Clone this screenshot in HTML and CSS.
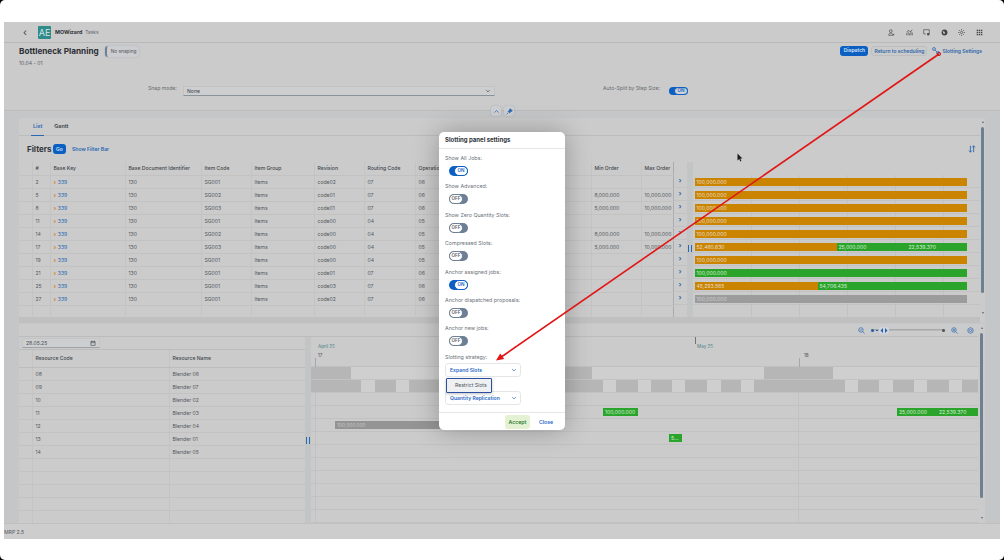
FILE: index.html
```html
<!DOCTYPE html>
<html lang="en">
<head>
<meta charset="utf-8">
<title>Bottleneck Planning</title>
<link rel="stylesheet" href="styles.css">
</head>
<body>
<div class="page">
  <div class="app">
    <div class="shell">
      <span class="back">&#8249;</span>
      <span class="logo">AE</span>
      <span class="appname">MOWizard</span>
      <span class="apptask">Tasks</span>
      <span class="shell-icons">
        <svg class="ico" viewBox="0 0 10 10"><circle cx="4" cy="3" r="2"/><path d="M1 9c0-2 1-3 3-3s3 1 3 3zM8 7v2M7 8h2"/></svg>
        <svg class="ico" viewBox="0 0 10 10"><path d="M1 9V6M3 9V4M5 9V6M7 9V3M9 9V5M1 4l3-2 2 2 3-3"/></svg>
        <svg class="ico" viewBox="0 0 10 10"><path d="M1 1h8v6H6M1 1v6h3"/><rect x="6" y="6" width="3" height="3" class="fill"/></svg>
        <svg class="ico" viewBox="0 0 10 10"><circle cx="5" cy="5" r="4.2" class="fill"/><path d="M2 3l3 1 1 2-2 1zM6 1l2 2" class="cut"/></svg>
        <svg class="ico" viewBox="0 0 10 10"><circle cx="5" cy="5" r="1.6"/><path d="M5 0v2M5 8v2M0 5h2M8 5h2M1.5 1.5l1.4 1.4M7.1 7.1l1.4 1.4M1.5 8.5l1.4-1.4M7.1 2.9l1.4-1.4"/></svg>
        <svg class="ico" viewBox="0 0 10 10"><path d="M1 1h2v2H1zM4 1h2v2H4zM7 1h2v2H7zM1 4h2v2H1zM4 4h2v2H4zM7 4h2v2H7zM1 7h2v2H1zM4 7h2v2H4zM7 7h2v2H7z" class="fill"/></svg>
      </span>
    </div>

    <div class="header">
      <div class="title-row">
        <div class="title-left">
          <h1 class="title">Bottleneck Planning</h1>
          <span class="chip">No snaping</span>
        </div>
        <div class="actions">
          <span class="btn btn-primary">Dispatch</span>
          <span class="btn btn-outline">Return to scheduling</span>
          <span class="btn-link">
            <svg class="ico-blue big" viewBox="0 0 10 10"><circle cx="2.5" cy="2.5" r="1.8"/><circle cx="7.5" cy="7.5" r="1.8"/><path d="M4 4l2 2"/></svg>
            Slotting Settings
          </span>
        </div>
      </div>
      <div class="subtitle">10.04 - 01</div>
      <div class="snap-row">
        <span class="snap-label">Snap mode:</span>
        <div class="snap-select"><span>None</span><svg class="chev" viewBox="0 0 10 10"><path d="M2 3.5l3 3 3-3"/></svg></div>
        <span class="split-label">Auto-Split by Step Size:</span>
        <span class="toggle on dim"><span class="knob">ON</span></span>
      </div>
      <div class="collapse">
        <span class="round"><svg class="ico-blue" viewBox="0 0 10 10"><path d="M2 6.5l3-3 3 3"/></svg></span>
        <span class="round"><svg class="ico-blue" viewBox="0 0 10 10"><path d="M6 1l3 3-2 1-2 2-2-2 2-2zM3 7L1 9" class="thick"/></svg></span>
      </div>
    </div>

    <div class="main">
      <section class="panel upper">
        <div class="panel-body">
          <div class="tabs"><span class="tab active">List</span><span class="tab">Gantt</span></div>
          <div class="filters">
            <span class="filters-title">Filters</span>
            <span class="go">Go</span>
            <span class="show-filter">Show Filter Bar</span>
            <svg class="sort" viewBox="0 0 10 10"><path d="M3 1v8M1.2 7L3 9l1.8-2M7 9V1M5.2 3L7 1l1.8 2"/></svg>
          </div>
          <div class="split">
            <table class="grid">
              <colgroup><col class="c1"><col class="c2"><col class="c3"><col class="c4"><col class="c5"><col class="c6"><col class="c7"><col class="c8"><col class="c9"><col class="c10"><col class="c11"></colgroup>
              <thead><tr><th></th><th>#</th><th>Base Key</th><th>Base Document Identifier</th><th>Item Code</th><th>Item Group</th><th>Revision</th><th>Routing Code</th><th>Operation</th><th>Min Order</th><th>Max Order</th></tr></thead>
              <tbody>
                <tr><td></td><td>2</td><td><span class="ok">&#8250;</span> <a class="lnk">339</a></td><td>130</td><td>SG001</td><td>Items</td><td>code02</td><td>07</td><td>06</td><td></td><td></td></tr>
                <tr><td></td><td>5</td><td><span class="ok">&#8250;</span> <a class="lnk">339</a></td><td>130</td><td>SG002</td><td>Items</td><td>code01</td><td>07</td><td>06</td><td>8,000.000</td><td>10,000.000</td></tr>
                <tr><td></td><td>8</td><td><span class="ok">&#8250;</span> <a class="lnk">339</a></td><td>130</td><td>SG003</td><td>Items</td><td>code01</td><td>07</td><td>06</td><td>5,000.000</td><td>10,000.000</td></tr>
                <tr><td></td><td>11</td><td><span class="ok">&#8250;</span> <a class="lnk">339</a></td><td>130</td><td>SG001</td><td>Items</td><td>code00</td><td>04</td><td>05</td><td></td><td></td></tr>
                <tr><td></td><td>14</td><td><span class="ok">&#8250;</span> <a class="lnk">339</a></td><td>130</td><td>SG002</td><td>Items</td><td>code00</td><td>04</td><td>05</td><td>8,000.000</td><td>10,000.000</td></tr>
                <tr><td></td><td>17</td><td><span class="ok">&#8250;</span> <a class="lnk">339</a></td><td>130</td><td>SG003</td><td>Items</td><td>code00</td><td>04</td><td>05</td><td>5,000.000</td><td>10,000.000</td></tr>
                <tr><td></td><td>19</td><td><span class="ok">&#8250;</span> <a class="lnk">339</a></td><td>130</td><td>SG001</td><td>Items</td><td>code00</td><td>04</td><td>05</td><td></td><td></td></tr>
                <tr><td></td><td>21</td><td><span class="ok">&#8250;</span> <a class="lnk">339</a></td><td>130</td><td>SG001</td><td>Items</td><td>code01</td><td>07</td><td>06</td><td></td><td></td></tr>
                <tr><td></td><td>25</td><td><span class="ok">&#8250;</span> <a class="lnk">339</a></td><td>130</td><td>SG001</td><td>Items</td><td>code03</td><td>07</td><td>06</td><td></td><td></td></tr>
                <tr><td></td><td>27</td><td><span class="ok">&#8250;</span> <a class="lnk">339</a></td><td>130</td><td>SG001</td><td>Items</td><td>code02</td><td>07</td><td>06</td><td></td><td></td></tr>
                <tr class="blank"><td></td><td></td><td></td><td></td><td></td><td></td><td></td><td></td><td></td><td></td><td></td></tr>
              </tbody>
            </table>
            <div class="navcol">
              <span>&#8250;</span><span>&#8250;</span><span>&#8250;</span><span>&#8250;</span><span>&#8250;</span><span>&#8250;</span><span>&#8250;</span><span>&#8250;</span><span>&#8250;</span><span>&#8250;</span>
            </div>
            <div class="handle"><i class="grip"></i></div>
            <div class="chart">
              <div class="crow"><div class="bar or grow">100,000.000</div></div>
              <div class="crow"><div class="bar or grow">100,000.000</div></div>
              <div class="crow"><div class="bar or grow">100,000.000</div></div>
              <div class="crow"><div class="bar or grow">100,000.000</div></div>
              <div class="crow"><div class="bar or grow">100,000.000</div></div>
              <div class="crow"><div class="bar or" style="width:142px">52,460.630</div><div class="bar gr" style="width:70px">25,000.000</div><div class="bar gr" style="width:60px">22,539.370</div></div>
              <div class="crow"><div class="bar or grow">100,000.000</div></div>
              <div class="crow"><div class="bar gr grow">100,000.000</div></div>
              <div class="crow"><div class="bar or" style="width:123px">45,293.565</div><div class="bar gr grow">54,706.435</div></div>
              <div class="crow"><div class="bar gy grow">100,000.000</div></div>
            </div>
          </div>
          <div class="hbar"></div>
        </div>
        <div class="vscroll"><i class="up"></i><b class="thumb-up"></b><i class="down"></i></div>
      </section>

      <section class="panel lower">
        <div class="panel-body">
          <div class="toolbar">
            <svg class="ico-blue tool" viewBox="0 0 10 10"><circle cx="4.2" cy="4.2" r="3.2"/><path d="M6.6 6.6L9.4 9.4M2.6 4.2h3.2"/></svg>
            <span class="slider"><i class="dot"></i><i class="dash"></i><i class="thumb"><svg class="thumb-arrows" viewBox="0 0 10 7"><path d="M4 1v5L1.5 3.5zM6 1v5l2.5-2.5z"/></svg></i><i class="dot end"></i></span>
            <svg class="ico-blue tool" viewBox="0 0 10 10"><circle cx="4.2" cy="4.2" r="3.2"/><path d="M6.6 6.6L9.4 9.4M2.6 4.2h3.2M4.2 2.6v3.2"/></svg>
            <svg class="ico-blue tool gear" viewBox="0 0 10 10"><circle cx="5" cy="5" r="1.6"/><path d="M5 .8l3.6 2.1v4.2L5 9.2 1.4 7.1V2.9z"/></svg>
          </div>
          <div class="gantt">
            <div class="res">
              <div class="date-row"><div class="date"><span>28.05.25</span><svg class="cal" viewBox="0 0 10 10"><path d="M1.5 2.5h7v6.5h-7zM1.5 4.5h7M3 1v2M7 1v2"/></svg></div></div>
              <table class="grid resgrid">
                <colgroup><col class="r1"><col class="r2"><col class="r3"></colgroup>
                <thead><tr><th></th><th>Resource Code</th><th>Resource Name</th></tr></thead>
                <tbody>
                  <tr><td></td><td>08</td><td>Blender 06</td></tr>
                  <tr><td></td><td>09</td><td>Blender 07</td></tr>
                  <tr><td></td><td>10</td><td>Blender 02</td></tr>
                  <tr><td></td><td>11</td><td>Blender 03</td></tr>
                  <tr><td></td><td>12</td><td>Blender 04</td></tr>
                  <tr><td></td><td>13</td><td>Blender 01</td></tr>
                  <tr><td></td><td>14</td><td>Blender 05</td></tr>
                  <tr><td></td><td></td><td></td></tr>
                  <tr><td></td><td></td><td></td></tr>
                  <tr><td></td><td></td><td></td></tr>
                  <tr><td></td><td></td><td></td></tr>
                  <tr><td></td><td></td><td></td></tr>
                </tbody>
              </table>
            </div>
            <div class="handle"><i class="grip low"></i></div>
            <div class="timeline">
              <div class="axis months"><span class="month" style="width:379px">April 25</span><span class="month tick">May 25</span></div>
              <div class="axis days"><span class="day" style="width:485px">17</span><span class="day second">18</span></div>
              <div class="trows">
                <div class="trow"><i class="nw" style="width:40px"></i><i class="wk" style="width:169px"></i><i class="nw" style="width:72px"></i><i class="wk" style="width:172px"></i><i class="nw" style="width:69px"></i><i class="wk" style="width:145px"></i></div>
                <div class="trow">
                  <i class="nw" style="width:50px"></i><i class="wk" style="width:14px"></i><i class="nw" style="width:21px"></i><i class="wk" style="width:13px"></i><i class="nw" style="width:194px"></i>
                  <i class="wk" style="width:13px"></i><i class="nw" style="width:22px"></i><i class="wk" style="width:13px"></i><i class="nw" style="width:21px"></i><i class="wk" style="width:13px"></i><i class="nw" style="width:22px"></i><i class="wk" style="width:14px"></i><i class="nw" style="width:20px"></i><i class="wk" style="width:13px"></i><i class="nw" style="width:91px"></i><i class="wk" style="width:13px"></i><i class="nw" style="width:21px"></i><i class="wk" style="width:14px"></i><i class="nw" style="width:21px"></i><i class="wk" style="width:13px"></i><i class="nw" style="width:22px"></i><i class="wk" style="width:13px"></i><i class="nw" style="width:16px"></i>
                </div>
                <div class="trow"></div>
                <div class="trow"><i class="sp" style="width:292px"></i><div class="bar gr tb" style="width:35px">100,000.000</div><i class="sp" style="width:259px"></i><div class="bar gr tb" style="width:40px">25,000.000</div><div class="bar gr tb" style="width:41px">22,539.370</div></div>
                <div class="trow"><i class="sp" style="width:24px"></i><div class="bar gd tb" style="width:120px">100,000.000</div></div>
                <div class="trow"><i class="sp" style="width:358px"></i><div class="bar gr tb" style="width:13px">5...</div></div>
                <div class="trow"></div>
                <div class="trow"></div>
                <div class="trow"></div>
                <div class="trow"></div>
                <div class="trow"></div>
                <div class="trow"></div>
              </div>
            </div>
          </div>
        </div>
        <div class="vscroll low"><i class="up"></i><b class="thumb-low"></b><i class="down"></i></div>
      </section>
    </div>

    <div class="footer">MRP 2.5</div>

    <div class="modal">
      <div class="modal-title">Slotting panel settings</div>
      <div class="modal-body">
        <div class="field"><label>Show All Jobs:</label><span class="toggle on"><span class="knob">ON</span></span></div>
        <div class="field"><label>Show Advanced:</label><span class="toggle"><span class="knob">OFF</span></span></div>
        <div class="field"><label>Show Zero Quantity Slots:</label><span class="toggle"><span class="knob">OFF</span></span></div>
        <div class="field"><label>Compressed Slots:</label><span class="toggle"><span class="knob">OFF</span></span></div>
        <div class="field"><label>Anchor assigned jobs:</label><span class="toggle on"><span class="knob">ON</span></span></div>
        <div class="field"><label>Anchor dispatched proposals:</label><span class="toggle"><span class="knob">OFF</span></span></div>
        <div class="field"><label>Anchor new jobs:</label><span class="toggle"><span class="knob">OFF</span></span></div>
        <div class="sfield"><label>Slotting strategy:</label><div class="mselect"><span>Expand Slots</span><svg class="chev blue" viewBox="0 0 10 10"><path d="M2 3.5l3 3 3-3"/></svg></div></div>
        <div class="sfield second"><label></label><div class="mselect"><span>Quantity Replication</span><svg class="chev blue" viewBox="0 0 10 10"><path d="M2 3.5l3 3 3-3"/></svg></div></div>
      </div>
      <div class="modal-foot"><span class="accept">Accept</span><span class="close">Close</span></div>
      <div class="popup">Restrict Slots</div>
    </div>

    <svg class="annot" viewBox="0 0 1004 560" aria-hidden="true">
      <path class="cursor" d="M737.5 153.5v7l1.7-1.5 1.2 2.6 1-.5-1.2-2.5h2.3z"/>
      <circle class="dotred" cx="939" cy="54" r="1.6"/>
      <path class="redline" d="M939 54L502 356.5"/>
      <path class="redhead" d="M496 360.5l4.2-7 4 5.6z"/>
    </svg>
  </div>
</div>
</body>
</html>
```
FILE: styles.css
```css
* { box-sizing: border-box; }
html { background: #000; height: 100%; }
body {
  margin: 0; width: 1004px; height: 560px; overflow: hidden;
  background: #fff; border-radius: 5px;
  font-family: "Inter", "Liberation Sans", sans-serif; font-size: 5.1px; color: #4e5359;
}
.page { padding: 22px 4px 21px; height: 560px; }
.app { height: 517px; display: flex; flex-direction: column; background: #cbcbcb; }

/* shell */
.shell { height: 21px; flex: none; display: flex; align-items: center; border-bottom: 1px solid #b9b9b9; padding-left: 19px; background: #cbcbcb; }
.back { font-size: 10px; line-height: 10px; width: 15px; color: #3b3f45; }
.logo { width: 13px; height: 13px; background: #2f8a8a; color: #d5e5e5; font-size: 9px; line-height: 13px; text-align: center; border-radius: 1px; margin-right: 4px; }
.appname { font-weight: 700; color: #2f3338; font-size: 5.3px; margin-right: 3px; }
.apptask { color: #5d6268; font-size: 4.8px; }
.shell-icons { margin-left: auto; display: flex; gap: 10.6px; padding-right: 17px; }
.ico { width: 7px; height: 7px; fill: none; stroke: #3f444a; stroke-width: .9; }
.ico .fill { fill: #3f444a; stroke: none; }
.ico .cut { fill: #cbcbcb; stroke: none; }

/* header */
.header { height: 68px; flex: none; position: relative; border-bottom: 1px solid #bcbcbc; padding: 2px 18px 0 15px; background: #cbcbcb; }
.title-row { height: 12px; display: flex; justify-content: space-between; align-items: center; }
.title-left { display: flex; align-items: center; gap: 6px; }
.title { margin: 0; font-size: 8.2px; font-weight: 700; color: #2c3036; line-height: 12px; }
.chip { height: 11px; width: 34px; line-height: 10px; padding-left: 4px; font-size: 4.8px; color: #51565c; border-radius: 3px; background: #cbcdd0; border-left: 2px solid #6c7f94; box-shadow: 0 0 2px #aaaeb3; white-space: nowrap; }
.actions { display: flex; align-items: center; gap: 3px; }
.btn { height: 10px; line-height: 9px; border-radius: 3px; font-size: 5px; font-weight: 600; padding: 0 2px; text-align: center; white-space: nowrap; }
.btn-primary { width: 28px; background: #0c5fc2; color: #d4e3f5; }
.btn-outline { width: 56px; border: 1px solid #bcbec1; color: #2d66aa; line-height: 8px; }
.btn-link { display: flex; align-items: center; gap: 2px; color: #2d66aa; font-size: 5px; font-weight: 600; margin-left: 2px; white-space: nowrap; }
.ico-blue { width: 7px; height: 7px; fill: none; stroke: #2a68b2; stroke-width: 1; }
.ico-blue.big { width: 8px; height: 8px; }
.subtitle { font-size: 5.1px; line-height: 10px; margin-top: 1px; color: #5b6066; }
.snap-row { display: flex; align-items: flex-start; height: 11px; margin-top: 17px; padding-left: 129px; }
.snap-label { width: 35px; color: #676c72; line-height: 6px; }
.snap-select { width: 312px; height: 10px; margin-top: 1px; display: flex; align-items: center; justify-content: space-between; padding: 0 3px; background: #cdced0; border: 1px solid #c2c3c5; border-bottom: 1px solid #8a929c; color: #3d4147; }
.chev { width: 6px; height: 6px; fill: none; stroke: #4a4e54; stroke-width: 1.2; }
.chev.blue { stroke: #2a68b2; }
.split-label { margin-left: 108px; width: 66px; color: #676c72; line-height: 6px; white-space: nowrap; }
.collapse { position: absolute; left: 487px; bottom: -6px; display: flex; gap: 3px; }
.round { width: 10px; height: 10px; border-radius: 3px; background: #ccced1; box-shadow: 0 0 2px #a9adb2; display: flex; align-items: center; justify-content: center; }
.thick { stroke-width: 1.1; fill: #2a68b2; }

/* toggles */
.toggle { display: flex; width: 19px; height: 10px; border-radius: 5px; background: #6d7f93; align-items: stretch; }
.toggle.on { background: #0c5fc2; justify-content: flex-end; }
.knob { width: 14px; border-radius: 5px; background: #fff; border: 1px solid #6d7f93; color: #5c6066; font-size: 4.6px; line-height: 8px; text-align: center; font-weight: 600; }
.on .knob { border-color: #0c5fc2; color: #0c5fc2; }
.dim { height: 8px; margin-top: 2px; }
.dim .knob { background: #cfd3d8; line-height: 6px; }

/* main */
.main { height: 412px; flex: none; background: #c4c6c8; padding: 7px 15px 0; display: flex; flex-direction: column; gap: 1px; }
.panel { display: flex; background: #cbcbcb; }
.panel-body { width: 961px; flex: none; }
.upper { height: 205px; flex: none; }
.lower { height: 199px; flex: none; }
.tabs { height: 18px; display: flex; padding-left: 12px; gap: 8px; border-bottom: 1px solid #bcbcbc; }
.tab { font-size: 5.4px; font-weight: 600; line-height: 17px; padding: 0 2px; color: #3c4046; height: 18px; }
.tab.active { color: #2a68b2; border-bottom: 1px solid #2a68b2; }
.filters { height: 26px; display: flex; align-items: center; padding: 0 4px 1px 8px; }
.filters-title { font-size: 8px; font-weight: 700; color: #33373d; width: 26px; }
.go { width: 13px; height: 10px; line-height: 10px; background: #0c5fc2; color: #cfe0f4; border-radius: 3px; text-align: center; font-size: 5px; font-weight: 600; margin-right: 6px; }
.show-filter { color: #2a68b2; font-weight: 600; font-size: 5.1px; }
.sort { width: 8px; height: 8px; margin-left: auto; fill: none; stroke: #2a68b2; stroke-width: 1.1; }
.split { display: flex; height: 155px; }

/* tables */
.grid { border-collapse: collapse; table-layout: fixed; width: 654px; flex: none; height: 155px; }
.grid th, .grid td { padding: 0 0 0 3px; text-align: left; height: 13px; white-space: nowrap; overflow: hidden; font-size: 5.1px; line-height: 12px; border-bottom: 1px solid #c2c2c2; border-right: 1px solid #c4c4c4; font-weight: 400; color: #53585e; }
.grid th { font-weight: 500; color: #43474d; }
.grid td:last-child, .grid th:last-child { border-right: 1px solid #a9adb1; }
.grid .blank td { height: 12px; border-bottom: 0; }
.c1 { width: 13px; } .c2 { width: 18px; } .c3 { width: 75px; } .c4 { width: 76px; } .c5 { width: 50px; } .c6 { width: 63px; } .c7 { width: 50px; } .c8 { width: 51px; } .c9 { width: 176px; } .c10 { width: 50px; } .c11 { width: 32px; }
.ok { color: #d98a10; font-weight: 700; font-size: 6.5px; }
.lnk { color: #2a68b2; }
.navcol { width: 13px; flex: none; padding-top: 13px; display: flex; flex-direction: column; }
.navcol span { height: 13px; line-height: 12px; text-align: center; color: #2a68b2; font-size: 7px; font-weight: 700; border-bottom: 1px solid #c2c2c2; }
.handle { width: 6px; flex: none; background: #c2c4c6; position: relative; }
.grip { position: absolute; left: 1px; top: 83px; width: 4px; height: 7px; background: linear-gradient(90deg, #2a68b2 0 1.2px, transparent 1.2px 2.6px, #2a68b2 2.6px), repeating-linear-gradient(0deg, transparent 0 1px, #c2c4c6 1px 2px); background-blend-mode: normal; }
.grip.low { top: 100px; }
.chart { width: 288px; flex: none; padding-top: 13px; background-image: repeating-linear-gradient(90deg, transparent 0 47px, #c2c2c2 47px 48px); background-position: 11px 13px; background-repeat: no-repeat; background-size: 100% 142px; }
.crow { height: 13px; padding: 3px 14px 0 2px; display: flex; border-bottom: 1px solid #c2c2c2; }
.bar { height: 8px; line-height: 8px; font-size: 5.1px; color: #e6dfcf; padding-left: 2px; white-space: nowrap; overflow: hidden; flex: none; }
.grow { flex: 1; }
.or { background: #cb8400; }
.gr { background: #2ba42b; color: #d6ecd6; }
.gy { background: #9c9c9c; color: #cfcfcf; }
.gd { background: #949494; color: #c8c8c8; font-size: 4.8px; }
.hbar { height: 6px; background: #c0c0c0; }

/* scrollbars */
.vscroll { width: 5px; flex: none; display: flex; flex-direction: column; align-items: center; background: #cbcbcb; padding-top: 3px; }
.thumb-up, .thumb-low { display: block; width: 3px; background: #6d7f93; border-radius: 1.5px; margin-top: 4px; flex: none; }
.thumb-up { height: 166px; }
.thumb-low { height: 165px; }
.up { width: 0; height: 0; border: 1.5px solid transparent; border-top: 0; border-bottom: 2px solid #5f6b78; }
.down { width: 0; height: 0; margin-top: 19px; border: 1.5px solid transparent; border-bottom: 0; border-top: 2px solid #5f6b78; }
.vscroll.low { margin-left: -2px; width: 7px; }

/* lower panel */
.toolbar { height: 13px; display: flex; align-items: center; justify-content: flex-end; border-bottom: 1px solid #bcbcbc; padding-right: 6.5px; gap: 4px; }
.tool { width: 7px; height: 7px; }
.gear { margin-left: 5px; }
.slider { width: 74px; height: 7px; position: relative; margin: 0 2px; background: linear-gradient(#a8a8a8, #a8a8a8) no-repeat center / 100% 1.5px; }
.dot { position: absolute; left: 0; top: 2px; width: 3px; height: 3px; border-radius: 50%; background: #1f5fa8; }
.dash { position: absolute; left: 5px; top: 3px; width: 2px; height: 1.5px; background: #1f5fa8; }
.dot.end { left: auto; right: 0; background: #4c5259; }
.thumb { position: absolute; left: 8px; top: 0; width: 10px; height: 7px; border-radius: 3px; background: #cfd6df; }
.thumb-arrows { display: block; width: 10px; height: 7px; fill: #2a5f9e; }
.gantt { display: flex; height: 186px; }
.res { width: 286px; flex: none; }
.date-row { height: 13px; padding: 1px 0 0 3px; border-bottom: 1px solid #bcbcbc; }
.date { width: 78px; height: 10px; display: flex; align-items: center; justify-content: space-between; padding: 0 3px; background: #cdced0; border: 1px solid #c4c5c7; border-bottom: 1px solid #9ea3a9; color: #4d5157; }
.cal { width: 6px; height: 6px; fill: none; stroke: #45494f; stroke-width: 1; }
.resgrid { width: 286px; height: 173px; }
.resgrid th { height: 17px; border-bottom: 1px solid #bcbcbc; }
.resgrid td:last-child, .resgrid th:last-child { border-right: 0; }
.r1 { width: 13px; } .r2 { width: 137px; } .r3 { width: 136px; }
.timeline { width: 667px; flex: none; }
.axis { display: flex; padding-left: 7px; }
.months { height: 13px; line-height: 19px; font-size: 4.6px; color: #4f8586; }
.days { height: 17px; line-height: 12px; font-size: 4.6px; color: #4e5359; border-bottom: 1px solid #c0c0c0; }
.month, .day { flex: none; position: relative; }
.month.tick::before { content: ""; position: absolute; left: -2px; top: 0; width: 1px; height: 7px; background: #6f747a; }
.day::before { content: ""; position: absolute; left: -3px; top: 8px; width: 1px; height: 9px; background: #a4a7aa; }
.day.second { margin-left: 1px; }
.day.second::before { left: -5px; }
.trows { background: linear-gradient(#c2c2c2, #c2c2c2) 4px 0 / 1px 100% no-repeat, linear-gradient(#c2c2c2, #c2c2c2) 487px 0 / 1px 100% no-repeat; }
.trow { height: 13px; display: flex; border-bottom: 1px solid #c2c2c2; }
.trow i { display: block; flex: none; height: 12px; }
.nw { background: #b6b6b6; }
.wk { background: #cfcfcf; }
.sp { background: transparent; }
.tb { margin-top: 2px; }
.footer { height: 16px; flex: none; line-height: 16px; background: #cdcdcd; border-top: 1px solid #c0c0c0; font-size: 5.1px; color: #55595f; }

/* modal */
.modal { position: absolute; left: 439px; top: 132px; width: 126px; height: 298px; background: #fff; border-radius: 5px; box-shadow: 0 0 26px rgba(0,0,0,.28); display: flex; flex-direction: column; }
.modal-title { height: 17px; line-height: 16px; padding-left: 6px; font-size: 6px; font-weight: 700; color: #2f3338; border-bottom: 1px solid #e6e6e6; flex: none; }
.modal-body { flex: 1; padding: 4px 6px 0; }
.field { height: 28.4px; }
.field label, .sfield label { display: block; height: 10px; line-height: 10px; font-size: 5.3px; color: #6a7078; white-space: nowrap; }
.field .toggle { margin: 3px 0 0 4px; }
.sfield { height: 28px; }
.sfield.second { height: 25px; }
.mselect { width: 76px; height: 14px; margin-top: 1px; display: flex; align-items: center; justify-content: space-between; padding: 0 3px 0 4px; border: 1px solid #e4e6e8; border-radius: 3px; color: #2a68c8; font-size: 5.1px; font-weight: 600; }
.modal-foot { height: 18px; flex: none; display: flex; align-items: center; border-top: 1px solid #e6e6e6; padding-left: 66px; }
.accept { width: 25px; height: 14px; line-height: 14px; text-align: center; border-radius: 3px; background: #e4f1d2; color: #2f7d32; font-size: 5.2px; font-weight: 600; }
.close { margin-left: 9px; color: #2a68c8; font-size: 5.1px; font-weight: 600; }
.popup { position: absolute; left: 7px; top: 246px; width: 46px; height: 15px; line-height: 12px; padding-left: 8px; font-size: 5.1px; color: #50555b; background: #eef0f2; border: 1.5px solid #2b4f9e; border-radius: 1px; box-shadow: 0 1px 3px rgba(0,0,0,.25); }

/* annotation */
.annot { position: absolute; left: 0; top: 0; width: 1004px; height: 560px; pointer-events: none; }
.redline { stroke: #e21414; stroke-width: 1.6; fill: none; }
.redhead { fill: #e21414; }
.dotred { fill: none; stroke: #c81818; stroke-width: 1; }
.cursor { fill: #1c1c1c; }
```
